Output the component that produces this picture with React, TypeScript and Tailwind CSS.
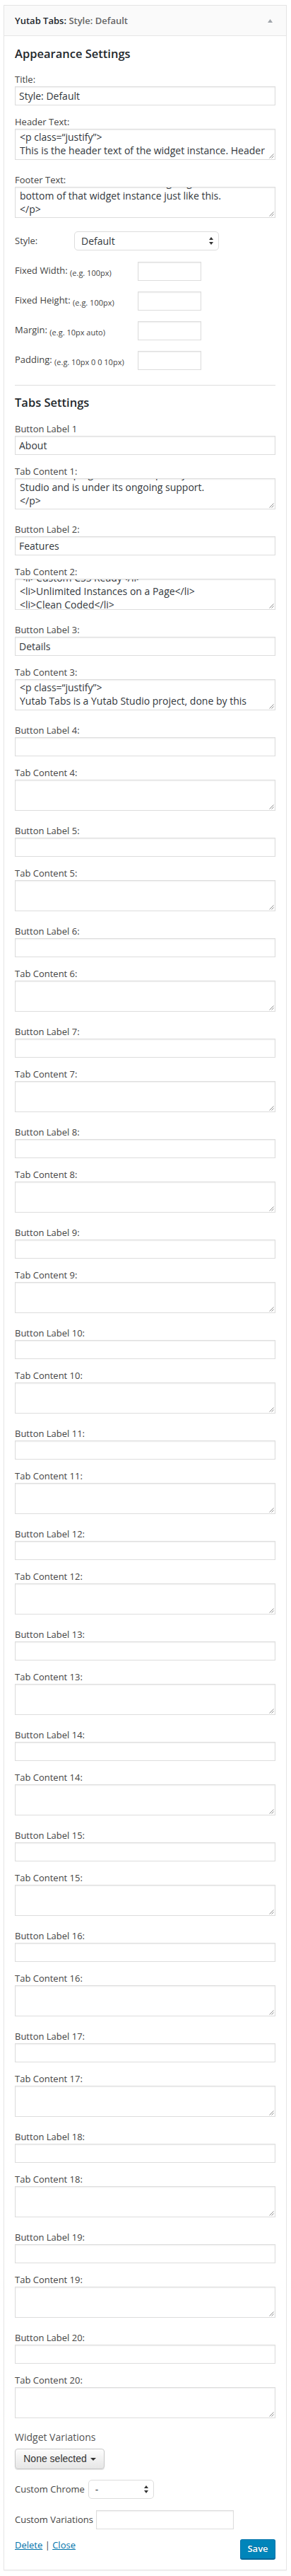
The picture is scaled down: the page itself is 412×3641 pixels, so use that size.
import React from "react";

function Grip() {
  return (
    <svg className="absolute right-[1px] bottom-[1px]" width="8" height="8" viewBox="0 0 8 8">
      <path d="M7.5 1.5 L1.5 7.5 M7.5 4.5 L4.5 7.5" stroke="#8c8c8c" strokeWidth="1" fill="none" />
    </svg>
  );
}

function UpDown() {
  return (
    <svg width="6" height="11" viewBox="0 0 6 11">
      <path d="M3 0 L6 4 L0 4 Z" fill="#333" />
      <path d="M0 7 L6 7 L3 11 Z" fill="#333" />
    </svg>
  );
}

function TextBox({ lines, shift }: { lines: string[]; shift: string }) {
  return (
    <div className="relative h-[44px] border border-[#ddd] bg-white shadow-[inset_0_1px_2px_rgba(0,0,0,0.07)] overflow-hidden">
      <div className={"px-[6px] text-[14px] leading-[19px] text-[#32373c] whitespace-pre " + shift}>
        {lines.map((l, i) => (
          <div key={i}>{l}</div>
        ))}
      </div>
      <Grip />
    </div>
  );
}

function TextInput({ value, cls }: { value: string; cls: string }) {
  return (
    <input
      readOnly
      defaultValue={value}
      className={
        "block h-[27px] border border-[#ddd] bg-white px-[5px] text-[14px] text-[#32373c] shadow-[inset_0_1px_2px_rgba(0,0,0,0.07)] outline-none font-['Open_Sans',sans-serif] " +
        cls
      }
    />
  );
}

function Label({ children }: { children: React.ReactNode }) {
  return <div className="text-[13px] leading-[20px] text-[#444]">{children}</div>;
}

type Tab = { label: string; value: string; lines: string[]; shift: string };

const tabs: Tab[] = Array.from({ length: 20 }, (_, i) => ({
  label: i === 0 ? "Button Label 1" : `Button Label ${i + 1}:`,
  value: "",
  lines: [],
  shift: "pt-[1px]",
}));

tabs[0].value = "About";
tabs[0].lines = [
  "Yutab Tabs plugin was developed by Yutab",
  "Studio and is under its ongoing support.",
  "</p>",
];
tabs[0].shift = "mt-[-17px]";
tabs[1].value = "Features";
tabs[1].lines = [
  "<li>Custom CSS Ready</li>",
  "<li>Unlimited Instances on a Page</li>",
  "<li>Clean Coded</li>",
];
tabs[1].shift = "mt-[-12px]";
tabs[2].value = "Details";
tabs[2].lines = ["<p class=\u201Cjustify\u201D>", "Yutab Tabs is a Yutab Studio project, done by this"];
tabs[2].shift = "pt-[1px]";

function SmallRow({ label, hint, mt }: { label: string; hint: string; mt: string }) {
  return (
    <div className={"flex items-center " + mt}>
      <span className="w-[174px] text-[13px] text-[#444]">
        {label} <span className="text-[11px] align-[-3px]">{hint}</span>
      </span>
      <TextInput value="" cls="w-[90px]" />
    </div>
  );
}

export default function App() {
  return (
    <div className="bg-white pt-[7px] pb-[7px] font-['Open_Sans',sans-serif]">
      <div className="ml-[5px] w-[401px] border border-[#e5e5e5] bg-white shadow-[0_1px_1px_rgba(0,0,0,0.04)]">
        <div className="flex h-[43px] items-center justify-between border-b border-[#e5e5e5] bg-[#fafafa] pl-[15px] pr-[19px]">
          <div className="text-[13px] font-semibold leading-none">
            <span className="text-[#23282d]">Yutab Tabs:</span>{" "}
            <span className="text-[#666]">Style: Default</span>
          </div>
          <svg width="7" height="5" viewBox="0 0 7 5">
            <path d="M3.5 0 L7 5 L0 5 Z" fill="#a0a5aa" />
          </svg>
        </div>

        <div className="px-[15px] pb-[15px]">
          <h3 className="mt-[13px] text-[16.5px] font-semibold leading-[24px] text-[#23282d]">
            Appearance Settings
          </h3>

          <div className="mt-[14px]">
            <Label>Title:</Label>
            <TextInput value="Style: Default" cls="w-full" />
          </div>

          <div className="mt-[13px]">
            <Label>Header Text:</Label>
            <TextBox
              lines={[
                "<p class=\u201Cjustify\u201D>",
                "This is the header text of the widget instance. Header",
              ]}
              shift="pt-[1px]"
            />
          </div>

          <div className="mt-[18px]">
            <Label>Footer Text:</Label>
            <TextBox
              lines={[
                "This is the footer text and it will go right at the",
                "bottom of that widget instance just like this.",
                "</p>",
              ]}
              shift="mt-[-17px]"
            />
          </div>

          <div className="mt-[19px] flex items-center">
            <span className="w-[84px] text-[13px] text-[#444]">Style:</span>
            <div className="flex h-[27px] w-[205px] items-center justify-between rounded-[5px] border border-[#ddd] bg-white pl-[9px] pr-[7px] text-[14px] text-[#32373c]">
              <span>Default</span>
              <UpDown />
            </div>
          </div>

          <SmallRow label="Fixed Width:" hint="(e.g. 100px)" mt="mt-[16px]" />
          <SmallRow label="Fixed Height:" hint="(e.g. 100px)" mt="mt-[15px]" />
          <SmallRow label="Margin:" hint="(e.g. 10px auto)" mt="mt-[15px]" />
          <SmallRow label="Padding:" hint="(e.g. 10px 0 0 10px)" mt="mt-[15px]" />

          <div className="mt-[21px] h-px bg-[#ddd]" />

          <h3 className="mt-[12px] text-[16.5px] font-semibold leading-[24px] text-[#23282d]">
            Tabs Settings
          </h3>

          <div className="mt-[15px]">
            {tabs.map((t, i) => (
              <div key={i} className={i === 0 ? "" : "mt-[18px]"}>
                <Label>{t.label}</Label>
                <TextInput value={t.value} cls="w-full" />
                <div className="mt-[13px]">
                  <Label>{`Tab Content ${i + 1}:`}</Label>
                  <TextBox lines={t.lines} shift={t.shift} />
                </div>
              </div>
            ))}
          </div>

          <div className="mt-[17px] text-[14px] leading-[20px] text-[#555]">Widget Variations</div>
          <div className="mt-[6px] flex h-[29px] w-[127px] items-center justify-center gap-[5px] rounded-[4px] border border-[#c8c8c8] bg-gradient-to-b from-[#fdfdfd] to-[#e6e6e6] shadow-[0_1px_1px_rgba(0,0,0,0.12)] font-['Liberation_Sans',Arial,sans-serif] text-[14px] text-[#333]">
            <span>None selected</span>
            <svg width="8" height="4" viewBox="0 0 8 4">
              <path d="M0 0 L8 0 L4 4 Z" fill="#333" />
            </svg>
          </div>

          <div className="mt-[15px] flex items-center">
            <span className="mr-[5px] text-[13px] text-[#444]">Custom Chrome</span>
            <div className="flex h-[27px] w-[93px] items-center justify-between rounded-[5px] border border-[#ddd] bg-white pl-[9px] pr-[7px] text-[14px] text-[#32373c]">
              <span>-</span>
              <UpDown />
            </div>
          </div>

          <div className="mt-[16px] flex items-center">
            <span className="mr-[4px] text-[13px] text-[#444]">Custom Variations</span>
            <TextInput value="" cls="w-[195px]" />
          </div>

          <div className="mt-[14px] flex items-start justify-between">
            <div className="text-[13px] leading-[17px] text-[#444]">
              <a className="text-[#0073aa] underline">Delete</a> | <a className="text-[#0073aa] underline">Close</a>
            </div>
            <button className="h-[28px] w-[50px] rounded-[3px] border border-[#0073aa] border-b-[#006799] bg-[#0085ba] text-[13px] font-semibold text-white shadow-[0_1px_0_#006799] [text-shadow:0_-1px_1px_#006799]">
              Save
            </button>
          </div>
        </div>
      </div>
    </div>
  );
}
